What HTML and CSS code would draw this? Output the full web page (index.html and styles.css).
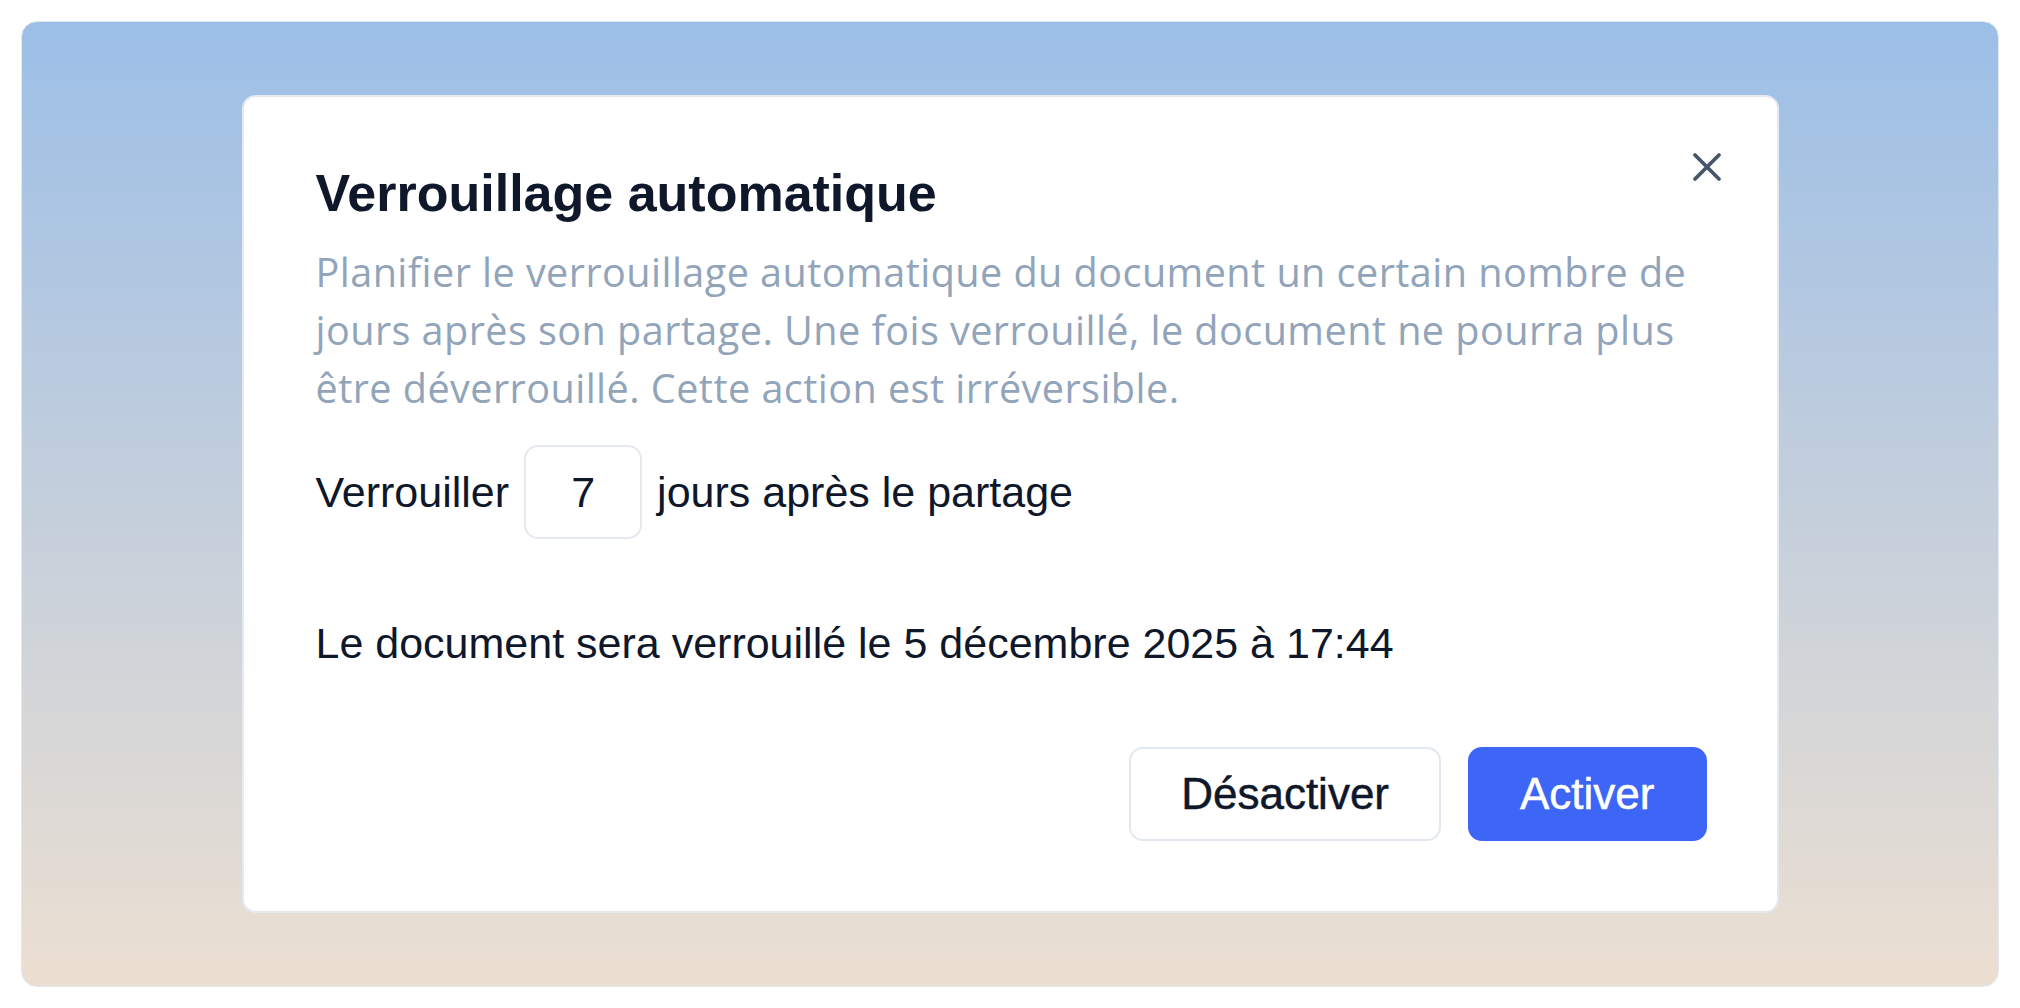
FILE: index.html
```html
<!DOCTYPE html>
<html lang="fr">
<head>
<meta charset="utf-8">
<title>Verrouillage automatique</title>
<link rel="stylesheet" href="styles.css">
</head>
<body>
<div class="frame">
  <div class="modal">
    <button class="close" aria-label="Fermer">
      <svg viewBox="0 0 30 30" width="30" height="30"><path d="M3 3 L27 27 M27 3 L3 27" stroke="#475569" stroke-width="3.8" stroke-linecap="round" fill="none"/></svg>
    </button>
    <h1 class="title">Verrouillage automatique</h1>
    <p class="desc">Planifier le verrouillage automatique du document un certain nombre de jours après son partage. Une fois verrouillé, le document ne pourra plus être déverrouillé. Cette action est irréversible.</p>
    <div class="lock-row">
      <span>Verrouiller</span>
      <div class="days">7</div>
      <span>jours après le partage</span>
    </div>
    <p class="date">Le document sera verrouillé le 5 décembre 2025 à 17:44</p>
    <div class="actions">
      <button class="btn btn-secondary">Désactiver</button>
      <button class="btn btn-primary">Activer</button>
    </div>
  </div>
</div>
</body>
</html>
```

FILE: styles.css
```css
* { box-sizing: border-box; }
html, body { margin: 0; padding: 0; background: #ffffff; }
body { font-family: "Liberation Sans", Arial, sans-serif; color: #0f172a; }

.frame {
  margin: 21px;
  height: 966px;
  border: 1px solid #e2e8f0;
  border-radius: 16px;
  background: linear-gradient(180deg, #9cbfe7 0%, #c4cfdc 50%, #ecdfd1 100%);
  display: flex;
  align-items: center;
  justify-content: center;
}

.modal {
  position: relative;
  width: 1537px;
  background: #ffffff;
  border: 2px solid #e5e9f0;
  border-radius: 14px;
  padding: 65px 70px 70px 72px;
}

.close {
  position: absolute;
  top: 55px;
  right: 55px;
  width: 30px;
  height: 30px;
  padding: 0;
  border: 0;
  background: none;
  display: flex;
}

.title {
  margin: 0;
  font-size: 52px;
  line-height: 62px;
  font-weight: 700;
  color: #0f172a;
}

.desc {
  margin: 19px 0 0;
  font-family: "Open Sans", sans-serif;
  font-size: 39.6px;
  line-height: 58px;
  letter-spacing: 0.45px;
  color: #91a4ba;
}

.lock-row {
  margin-top: 28px;
  display: flex;
  align-items: center;
  gap: 15px;
  font-size: 43px;
}

.days {
  width: 118px;
  height: 94px;
  border: 2px solid #e5e9f0;
  border-radius: 14px;
  display: flex;
  align-items: center;
  justify-content: center;
  font-size: 43px;
}

.date {
  margin: 78px 0 0;
  font-size: 43px;
  line-height: 52px;
}

.actions {
  margin-top: 78px;
  display: flex;
  justify-content: flex-end;
  gap: 27px;
}

.btn {
  height: 94px;
  padding: 0 50px;
  border-radius: 14px;
  font-family: "Liberation Sans", Arial, sans-serif;
  font-size: 44px;
  -webkit-text-stroke: 0.5px currentColor;
}

.btn-secondary {
  background: #ffffff;
  color: #0f172a;
  border: 2px solid #e2e8f0;
}

.btn-primary {
  background: #3d65f6;
  color: #ffffff;
  border: 2px solid #3d65f6;
}
```
